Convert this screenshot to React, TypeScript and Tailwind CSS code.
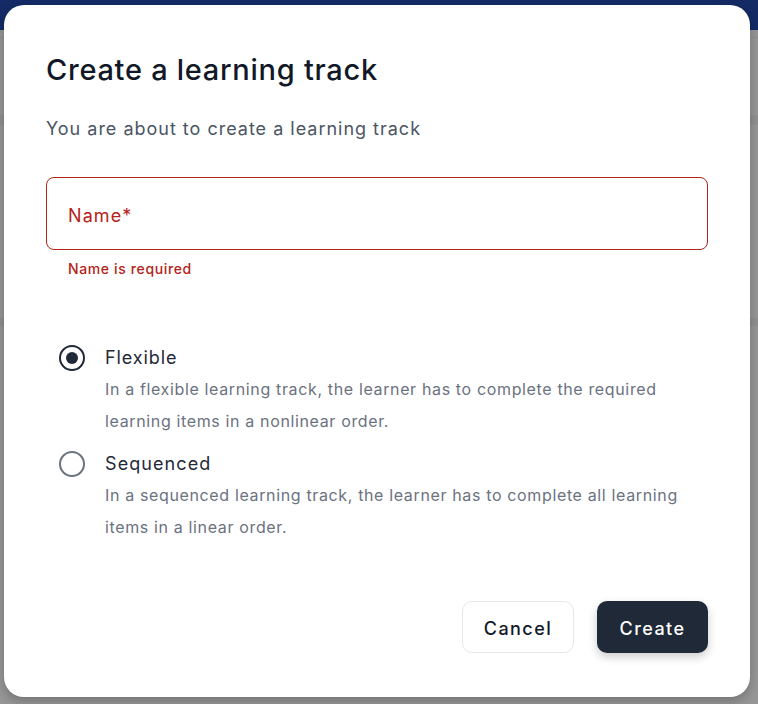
import React from "react";

export default function App() {
  return (
    <div className="relative w-[758px] h-[704px] overflow-hidden bg-[#979797]" style={{ fontFamily: "Inter, 'Noto Sans', sans-serif" }}>
      <div className="absolute inset-x-0 top-0 h-[30px] bg-[#142b66]" />
      <div className="absolute inset-x-0 top-[37px] h-px bg-[#8f8f8f]" />
      <div className="absolute inset-x-0 top-[115px] h-[10px] bg-[#909090]" />
      <div className="absolute inset-x-0 top-[318px] h-[8px] bg-[#909090]" />
      <div className="absolute left-[4px] top-[5px] w-[746px] h-[692px] rounded-[20px] bg-white shadow-[0_4px_12px_rgba(0,0,0,0.25)] px-[42px] pt-[47px] flex flex-col">
        <h1 className="text-[29px] leading-[36px] font-medium text-[#111827] tracking-[0.025em]">Create a learning track</h1>
        <p className="mt-[28px] text-[18px] leading-[26px] text-[#4b5563] tracking-[0.055em]">You are about to create a learning track</p>
        <div className="mt-[35px] h-[73px] rounded-[8px] border border-[#b42318] flex items-center pl-[21px] pt-[3px]">
          <span className="text-[18px] text-[#b42318] tracking-[0.06em]">Name*</span>
        </div>
        <p className="mt-[9px] pl-[22px] text-[14px] leading-[20px] font-medium text-[#b42318] tracking-[0.045em]">Name is required</p>
        <div className="mt-[64px] flex flex-col gap-[12px] pl-[13px]">
          <div className="flex gap-[20px]">
            <div className="mt-[2px] w-[26px] h-[26px] rounded-full border-[2px] border-[#1f2937] flex items-center justify-center shrink-0">
              <div className="w-[12px] h-[12px] rounded-full bg-[#1f2937]" />
            </div>
            <div className="flex flex-col">
              <span className="text-[18px] leading-[30px] text-[#1f2937] tracking-[0.05em]">Flexible</span>
              <span className="text-[16px] leading-[32px] text-[#6b7280] tracking-[0.04em]">In a flexible learning track, the learner has to complete the required<br />learning items in a nonlinear order.</span>
            </div>
          </div>
          <div className="flex gap-[20px]">
            <div className="mt-[2px] w-[26px] h-[26px] rounded-full border-[2px] border-[#6b7280] shrink-0" />
            <div className="flex flex-col">
              <span className="text-[18px] leading-[30px] text-[#1f2937] tracking-[0.06em]">Sequenced</span>
              <span className="text-[16px] leading-[32px] text-[#6b7280] tracking-[0.04em]">In a sequenced learning track, the learner has to complete all learning<br />items in a linear order.</span>
            </div>
          </div>
        </div>
        <div className="mt-auto mb-[44px] flex justify-end gap-[23px]">
          <button className="h-[52px] w-[112px] pt-[3px] rounded-[10px] border border-[#e5e7eb] bg-white text-[18px] font-medium text-[#111827] tracking-[0.08em]">Cancel</button>
          <button className="h-[52px] w-[111px] pt-[3px] rounded-[10px] bg-[#1f2937] text-[18px] font-medium text-white tracking-[0.08em] shadow-[0_4px_10px_rgba(0,0,0,0.2)]">Create</button>
        </div>
      </div>
    </div>
  );
}
